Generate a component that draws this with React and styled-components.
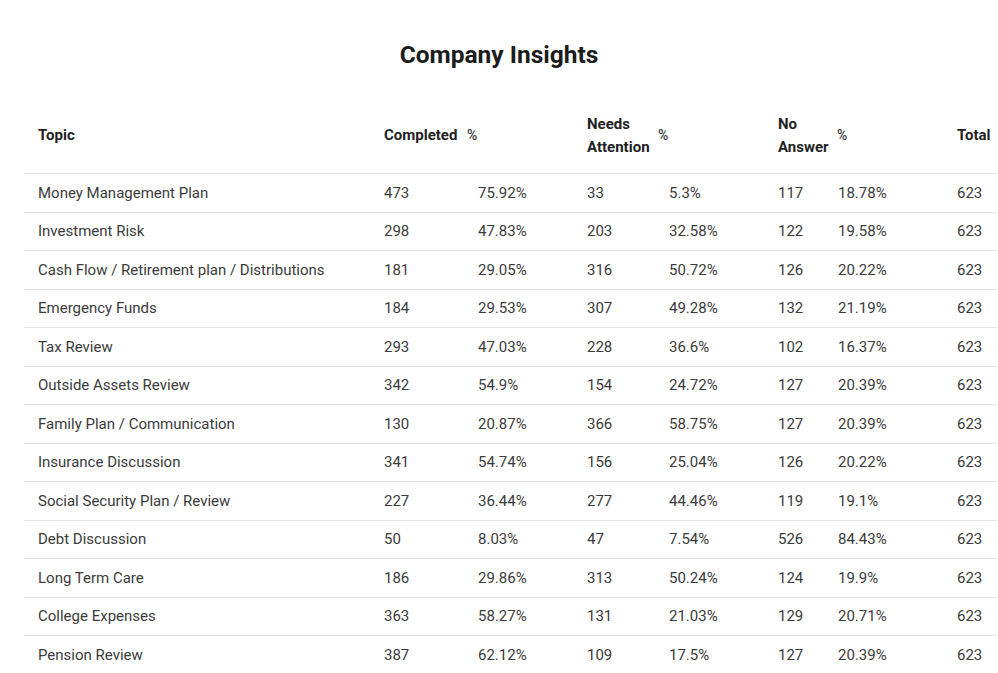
import React from "react";
import styled, { createGlobalStyle } from "styled-components";

const rows = [
  ["Money Management Plan", 473, "75.92%", 33, "5.3%", 117, "18.78%", 623],
  ["Investment Risk", 298, "47.83%", 203, "32.58%", 122, "19.58%", 623],
  ["Cash Flow / Retirement plan / Distributions", 181, "29.05%", 316, "50.72%", 126, "20.22%", 623],
  ["Emergency Funds", 184, "29.53%", 307, "49.28%", 132, "21.19%", 623],
  ["Tax Review", 293, "47.03%", 228, "36.6%", 102, "16.37%", 623],
  ["Outside Assets Review", 342, "54.9%", 154, "24.72%", 127, "20.39%", 623],
  ["Family Plan / Communication", 130, "20.87%", 366, "58.75%", 127, "20.39%", 623],
  ["Insurance Discussion", 341, "54.74%", 156, "25.04%", 126, "20.22%", 623],
  ["Social Security Plan / Review", 227, "36.44%", 277, "44.46%", 119, "19.1%", 623],
  ["Debt Discussion", 50, "8.03%", 47, "7.54%", 526, "84.43%", 623],
  ["Long Term Care", 186, "29.86%", 313, "50.24%", 124, "19.9%", 623],
  ["College Expenses", 363, "58.27%", 131, "21.03%", 129, "20.71%", 623],
  ["Pension Review", 387, "62.12%", 109, "17.5%", 127, "20.39%", 623],
];

const App = () => {
  return (
    <Page>
      <GlobalStyle />
      <Title>Company Insights</Title>
      <Table role="table">
        <HeadRow role="row">
          <Th>Topic</Th>
          <Th>Completed</Th>
          <Th $pct>%</Th>
          <Th>
            Needs
            <br />
            Attention
          </Th>
          <Th $pct>%</Th>
          <Th>
            No
            <br />
            Answer
          </Th>
          <Th $pct>%</Th>
          <Th>Total</Th>
        </HeadRow>
        {rows.map((r) => (
          <Row role="row" key={r[0]}>
            {r.map((v, i) => (
              <Td key={i}>{v}</Td>
            ))}
          </Row>
        ))}
      </Table>
    </Page>
  );
};

export default App;

const GlobalStyle = createGlobalStyle`
  body {
    margin: 0;
    background: #ffffff;
    font-family: Roboto, "Liberation Sans", sans-serif;
  }
`;

const Page = styled.div`
  padding: 40px 0 0 24px;
  width: 998px;
  box-sizing: border-box;
`;

const Title = styled.h1`
  margin: 0 0 28px -24px;
  font-size: 24.5px;
  line-height: 30px;
  font-weight: 700;
  color: #1c1c1c;
  text-align: center;
`;

const Table = styled.div`
  width: 973px;
`;

const HeadRow = styled.div`
  display: grid;
  grid-template-columns: 346px 94px 109px 82px 109px 70px 109px 1fr;
  align-items: center;
  height: 76px;
  box-sizing: border-box;
  border-bottom: 1px solid #e2e2e2;
`;

const Row = styled(HeadRow)`
  grid-template-columns: 346px 94px 109px 82px 109px 60px 119px 1fr;
  height: 38.5px;
`;

const Th = styled.div`
  padding-left: ${(p) => (p.$pct ? "3px" : "14px")};
  font-size: ${(p) => (p.$pct ? "14px" : "15px")};
  font-weight: ${(p) => (p.$pct ? 500 : 700)};
  line-height: 23px;
  color: ${(p) => (p.$pct ? "#3a3a3a" : "#222222")};
`;

const Td = styled.div`
  padding-left: 14px;
  font-size: 15px;
  line-height: 22px;
  color: #3b3b3b;
  white-space: nowrap;
`;
